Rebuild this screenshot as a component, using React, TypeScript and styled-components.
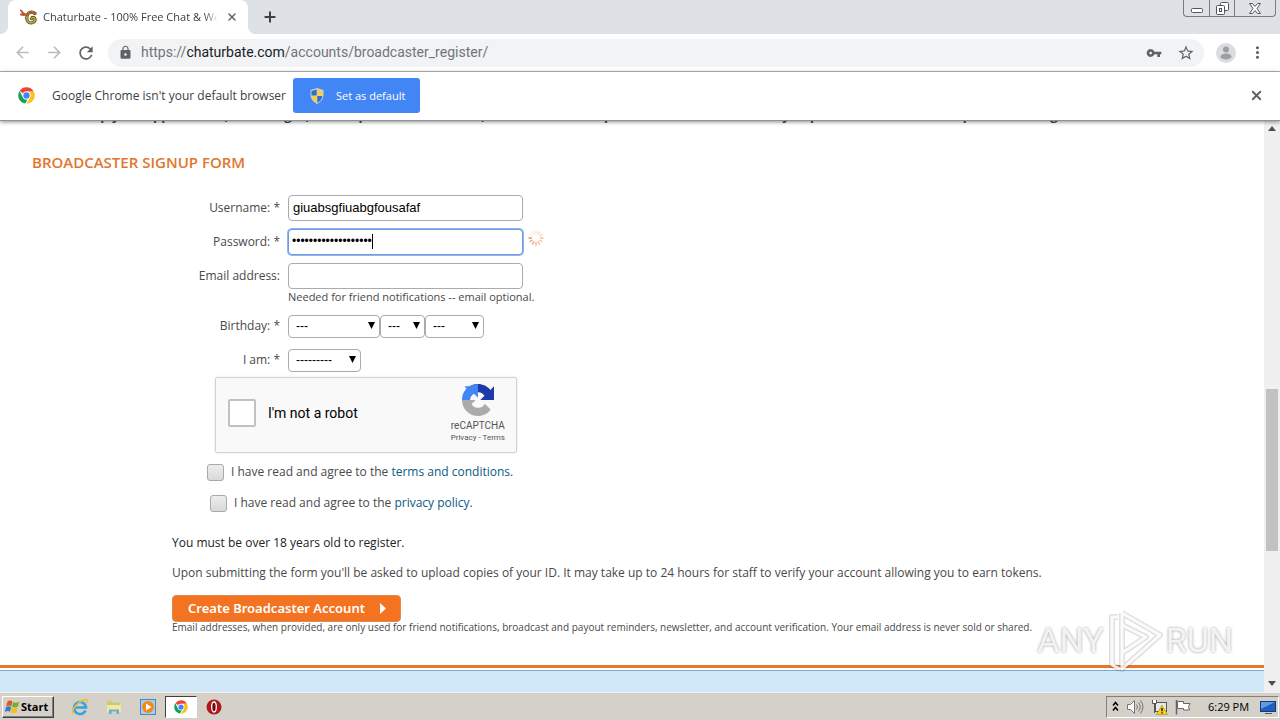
import React from "react";
import styled, { createGlobalStyle, css } from "styled-components";
import { X, Plus } from "lucide-react";
import { MdArrowBack, MdArrowForward, MdRefresh, MdLock, MdVpnKey, MdStarBorder, MdMoreVert } from "react-icons/md";

const ui = `"Open Sans", "Liberation Sans", sans-serif`;
const page = `"Open Sans", "Noto Sans", sans-serif`;

const Global = createGlobalStyle`
  *, *::before, *::after { box-sizing: border-box; }
  body { margin: 0; background: #fff; font-family: ${page}; }
  button, input, select { font: inherit; color: inherit; margin: 0; }
`;

const Screen = styled.div`
  display: flex;
  flex-direction: column;
  height: 100vh;
  overflow: hidden;
`;

/* Browser frame */
const TabStrip = styled.header`
  display: flex;
  align-items: stretch;
  flex: none;
  height: 34px;
  padding: 0 4px 0 8px;
  background: #dee1e6;
  font: 11px/34px ${ui};
`;

const Tab = styled.div`
  position: relative;
  display: flex;
  align-items: center;
  width: 240px;
  padding: 0 10px 0 12px;
  border-radius: 8px 8px 0 0;
  background: #fff;
  color: #3c4043;
  &::before, &::after {
    content: "";
    position: absolute;
    bottom: 0;
    width: 8px;
    height: 8px;
  }
  &::before { right: 100%; background: radial-gradient(circle at 0 0, transparent 8px, #fff 8px); }
  &::after { left: 100%; background: radial-gradient(circle at 100% 0, transparent 8px, #fff 8px); }
`;

const TabTitle = styled.span`
  flex: 1;
  margin: 0 8px 0 6px;
  overflow: hidden;
  white-space: nowrap;
  mask-image: linear-gradient(to right, #000 92%, transparent);
`;

const IconButton = styled.button<{ $w?: number; $tone?: string }>`
  display: flex;
  align-items: center;
  justify-content: center;
  flex: none;
  width: ${(p) => p.$w ?? 32}px;
  padding: 0;
  border: 0;
  background: none;
  color: ${(p) => p.$tone ?? "#5f6368"};
`;

const WindowButtons = styled.div`
  display: flex;
  height: 17px;
  margin-left: auto;
  border: 1px solid #777c86;
  border-top: 0;
  border-radius: 0 0 4px 4px;
`;

const WindowButton = styled.button<{ $w: number }>`
  display: flex;
  align-items: center;
  justify-content: center;
  width: ${(p) => p.$w}px;
  padding: 0;
  border: 0;
  background: none;
  & + & { border-left: 1px solid #777c86; }
`;

const Toolbar = styled.nav`
  display: flex;
  align-items: center;
  flex: none;
  height: 38px;
  padding: 0 6px;
  border-bottom: 1px solid #b4b6b8;
  background: #fff;
`;

const AddressBar = styled.div`
  display: flex;
  align-items: center;
  flex: 1;
  height: 28px;
  margin: 0 8px 0 6px;
  padding: 0 2px 0 10px;
  border-radius: 14px;
  background: #f1f3f4;
  font: 14px/26px Roboto, sans-serif;
  color: #70757a;
`;

const Url = styled.a`
  flex: 1;
  margin-left: 8px;
  padding-bottom: 2px;
  color: inherit;
  text-decoration: none;
  b { font-weight: 400; color: #202124; }
`;

const InfoBar = styled.aside`
  position: relative;
  display: flex;
  align-items: center;
  flex: none;
  height: 49px;
  padding: 0 8px 1px 18px;
  border-bottom: 1px solid #8f9294;
  background: #fff;
  box-shadow: 0 1px 4px rgba(0, 0, 0, 0.45);
  font: 12px/16px ${ui};
  color: #3c4043;
  z-index: 1;
`;

const InfoText = styled.span`
  margin: 0 7px 0 17px;
  white-space: nowrap;
`;

const DefaultButton = styled.button`
  display: flex;
  align-items: center;
  gap: 12px;
  width: 127px;
  height: 35px;
  margin-right: auto;
  padding: 0 0 0 17px;
  border: 0;
  border-radius: 3px;
  background: #4285f4;
  color: #fff;
  font-size: 11px;
`;

/* Web page */
const Viewport = styled.div`
  display: flex;
  flex: 1;
  min-height: 0;
`;

const Page = styled.main`
  display: flex;
  flex-direction: column;
  flex: 1;
  min-width: 0;
  overflow: hidden;
  font-size: 12px;
  line-height: 20px;
  color: #494949;
`;

const Intro = styled.p`
  display: flex;
  align-items: flex-end;
  flex: none;
  height: 5px;
  margin: 0 32px;
  overflow: hidden;
  font-weight: 700;
  white-space: nowrap;
  line-height: 22px;
  font-size: 13px;
`;

const Title = styled.h1`
  margin: 26px 32px 19px;
  font: 600 15px/20px ${page};
  color: #e2752b;
`;

const Form = styled.form`
  display: flex;
  flex-direction: column;
  align-items: flex-start;
`;

const Row = styled.div`
  display: flex;
  align-items: center;
  height: 34px;
`;

const Label = styled.label`
  width: 280px;
  margin-right: 8px;
  text-align: right;
`;

const InputWrap = styled.span`
  position: relative;
  display: flex;
  margin-right: 5px;
`;

const control = css`
  border: 1px solid #ababab;
  border-radius: 4px;
  background: #fff;
  font-family: "Liberation Sans", Arial, sans-serif;
  color: #000;
  outline: 0;
`;

const Input = styled.input<{ $active?: boolean }>`
  ${control}
  width: 235px;
  height: 26px;
  padding: 0 4px 2px;
  font-size: 13px;
  ${(p) => p.$active && css`
    padding: 0 3px 2px;
    border-color: #6d9be6;
    box-shadow: 0 0 0 1px #8fb4ee;
    font-size: 12px;
  `}
`;

const Caret = styled.i`
  position: absolute;
  left: 84px;
  top: 5px;
  width: 1px;
  height: 15px;
  background: #000;
`;

const Help = styled.small`
  height: 18px;
  margin: -2px 0 0 288px;
  font-size: 11px;
  line-height: 11px;
`;

const SelectWrap = styled.span<{ $w: number }>`
  position: relative;
  display: flex;
  width: ${(p) => p.$w}px;
  svg {
    position: absolute;
    right: 5px;
    top: 7px;
    pointer-events: none;
  }
`;

const SelectBox = styled.select`
  ${control}
  appearance: none;
  width: 100%;
  height: 23px;
  padding: 0 7px;
  font-size: 12px;
`;

const Captcha = styled.div`
  display: flex;
  align-items: center;
  width: 302px;
  height: 76px;
  margin: 0 0 3px 215px;
  padding: 0 11px 4px 12px;
  border: 1px solid #d3d3d3;
  border-radius: 2px;
  background: #f9f9f9;
  box-shadow: 0 0 3px rgba(0, 0, 0, 0.1);
  font: 14px/18px Roboto, sans-serif;
  color: #000;
`;

const CaptchaBox = styled.input`
  appearance: none;
  width: 28px;
  height: 28px;
  margin: 0 12px 0 0;
  border: 2px solid #c1c1c1;
  border-radius: 2px;
  background: #fff;
`;

const CaptchaBrand = styled.div`
  display: flex;
  flex-direction: column;
  align-items: center;
  margin: 2px 0 0 auto;
  color: #555;
  font-size: 10px;
  line-height: 13px;
  svg { margin-bottom: 3px; }
  small { font-size: 8px; line-height: 12px; }
  a { color: inherit; text-decoration: none; }
`;

const Agree = styled.label<{ $indent: number }>`
  display: flex;
  align-items: center;
  height: 31px;
  margin-left: ${(p) => p.$indent}px;
  a { color: #0a5a83; text-decoration: none; }
`;

const Tick = styled.input`
  appearance: none;
  width: 17px;
  height: 17px;
  margin: 1px 7px 0 0;
  border: 1px solid #a9a9a9;
  border-radius: 3px;
  background: linear-gradient(#ededed, #d9d9d9);
`;

const Closing = styled.section`
  display: flex;
  flex-direction: column;
  align-items: flex-start;
  margin: 15px 0 0 172px;
`;

const Note = styled.p<{ $bold?: boolean }>`
  margin: 0 0 10px;
  font-weight: ${(p) => (p.$bold ? 500 : 400)};
  color: ${(p) => (p.$bold ? "#222" : "inherit")};
  white-space: nowrap;
`;

const Submit = styled.button`
  display: flex;
  align-items: center;
  justify-content: space-between;
  height: 27px;
  min-width: 229px;
  margin-top: 2px;
  padding: 0 14px 2px 15px;
  border: 1px solid #dd8a55;
  border-radius: 4px;
  background: #f47321;
  color: #fff;
  font: 600 13px/20px "Noto Sans", ${page};
  svg { margin-top: 2px; }
`;

const Fine = styled.small`
  font-size: 10px;
  line-height: 10px;
  white-space: nowrap;
`;

const Footer = styled.footer`
  flex: 1;
  margin-top: 33px;
  padding-top: 2px;
  border-top: 3px solid #e8772e;
  &::before {
    content: "";
    display: block;
    height: 100%;
    border-top: 1px solid #85a9c4;
    background: #d0e8f8;
  }
`;

const Scrollbar = styled.div`
  display: flex;
  flex-direction: column;
  align-items: center;
  width: 16px;
  padding: 5px 0 6px;
  background: #f0f0f0;
`;

const Thumb = styled.div`
  width: 12px;
  flex: 162;
  background: #c1c1c1;
`;

const Track = styled.div<{ $grow: number }>`
  flex: ${(p) => p.$grow};
`;

const Watermark = styled.div`
  position: absolute;
  right: 47px;
  bottom: 47px;
  display: flex;
  align-items: center;
  gap: 2px;
  font: 400 34px/66px Roboto, "Liberation Sans", sans-serif;
  color: rgba(255, 255, 255, 0.85);
  text-shadow: 0 0 3px rgba(0, 0, 0, 0.4);
  z-index: 2;
`;

/* Taskbar */
const Taskbar = styled.footer`
  display: flex;
  align-items: center;
  flex: none;
  height: 28px;
  padding: 0 1px 0 2px;
  border-top: 1px solid #f4f2ee;
  background: #d5d0c8;
  font: 12px/20px "Open Sans", "Liberation Sans", sans-serif;
  color: #000;
`;

const Start = styled.button`
  display: flex;
  align-items: center;
  gap: 1px;
  height: 22px;
  width: 52px;
  margin-right: 9px;
  padding: 0 2px;
  border: 1px solid;
  border-color: #fff #404040 #404040 #fff;
  box-shadow: inset -1px -1px #808080;
  background: #d5d0c8;
  font: 700 11px/16px "Open Sans", sans-serif;
`;

const Task = styled.button<{ $active?: boolean }>`
  display: flex;
  align-items: center;
  justify-content: center;
  width: ${(p) => (p.$active ? 32 : 34)}px;
  height: 22px;
  padding: 0;
  border: 1px solid transparent;
  background: none;
  ${(p) => p.$active && css`
    border-color: #404040 #fff #fff #404040;
    background: #fff;
  `}
`;

const Tray = styled.div`
  display: flex;
  align-items: center;
  gap: 7px;
  height: 22px;
  margin-left: auto;
  padding: 0 2px 0 5px;
  border: 1px solid;
  border-color: #808080 #fff #fff #808080;
`;

const Clock = styled.time`
  width: 42px;
  margin: 0 3px 0 9px;
  font-size: 11px;
  white-space: nowrap;
`;

const ChromeLogo = ({ size = 18 }: { size?: number }) => (
  <svg width={size} height={size} viewBox="0 0 48 48">
    <circle cx="24" cy="24" r="23" fill="#fff" />
    <path d="M24 1a23 23 0 0 1 20 11.5H24A11.5 11.5 0 0 0 14 18L5 10.800A23 23 0 0 1 24 1z" fill="#ea4335" />
    <path d="M44 12.500A23 23 0 0 1 24 47l10-17.300a11.500 11.500 0 0 0 0-11.500L32 12.500z" fill="#fbc116" />
    <path d="M4.500 11.500L14 29.700A11.500 11.500 0 0 0 27 35L20.500 46.800A23 23 0 0 1 4.500 11.500z" fill="#16a05d" />
    <circle cx="24" cy="24" r="11" fill="#fff" />
    <circle cx="24" cy="24" r="9" fill="#4285f4" />
  </svg>
);

const Lizard = () => (
  <svg width="17" height="16" viewBox="0 0 17 16" fill="none" strokeLinecap="round">
    <path d="M15 4.500C12 2 8 3 7 7c-.8 4 1 7 4 7s4.500-2 4-4-3-2-3.500-.3" stroke="#55502a" strokeWidth="3.200" />
    <path d="M15 4.500C12 2 8 3 7 7c-.8 4 1 7 4 7s4.500-2 4-4-3-2-3.500-.3" stroke="#b3ab45" strokeWidth="1.600" />
    <path d="M7.500 6c1-2.500 3.500-3.500 6-2.500" stroke="#b5692c" strokeWidth="2" />
    <path d="M1 1.500l2 2.500L6.500 6M1 5.500l3 .5M10 3.500l5 1" stroke="#b5592c" strokeWidth="2" />
  </svg>
);

const Shield = () => (
  <svg width="14" height="16" viewBox="0 0 14 16">
    <path d="M7 0l6.500 2v5c0 4-3 7-6.500 9C3.500 14 .5 11 .5 7V2z" fill="#c9ced6" />
    <path d="M6.700 1.500v6H1.500V3z" fill="#2f6fc4" />
    <path d="M7.300 1.500v6h5.200V3z" fill="#f5d13a" />
    <path d="M6.700 8H1.600c.3 3 2.400 5.200 5.100 6.700z" fill="#f5d13a" />
    <path d="M7.300 8h5.100c-.3 3-2.400 5.200-5.100 6.700z" fill="#2f6fc4" />
  </svg>
);

const SpinnerBox = styled.span`
  display: flex;
  align-self: flex-start;
  padding-top: 5px;
`;

const Spinner = () => (
  <SpinnerBox>
    <svg width="16" height="16" viewBox="-8 -8 16 16" stroke="#f0905a" strokeWidth="1.300" strokeLinecap="round">
      {Array.from({ length: 12 }, (_, i) => (
        <line key={i} x1="0" y1="-4.500" x2="0" y2="-7" transform={`rotate(${270 - i * 30})`} opacity={1 - i * 0.075} />
      ))}
    </svg>
  </SpinnerBox>
);

const CaptchaLogo = () => (
  <svg width="32" height="32" viewBox="0 0 64 64">
    <path d="M64 31.950c0-.46-.01-.92-.03-1.370V4.600l-7.180 7.180C50.900 4.600 41.980 0 31.980 0 21.580 0 12.340 4.960 6.500 12.640l11.770 11.900a15.600 15.600 0 0 1 4.770-5.350c2.060-1.600 4.970-2.920 8.980-2.920.48 0 .86.060 1.140.17 4.970.39 9.270 3.130 11.810 7.100l-8.330 8.330c10.550-.04 22.470-.07 27.360.08z" fill="#1c3aa9" />
    <path d="M31.860 0C26 0 20 1.500 15 4.600H5l4 5A31 31 0 0 0 0 32.020l16.270-.06c0-.48.060-.86.170-1.140.39-4.970 3.130-9.270 7.100-11.810l8.330 8.330c-.04-10.550-.07-22.470-.01-27.340z" fill="#4285f4" />
    <path d="M0 32.020C0 50 14 63.980 32.020 63.980c10.400 0 19.640-4.960 25.480-12.640L45.730 39.440a15.600 15.600 0 0 1-4.770 5.350c-2.060 1.600-4.970 2.920-8.980 2.920-.48 0-.86-.06-1.140-.17-4.970-.39-9.270-3.130-11.810-7.100l8.330-8.330C16.810 32.150 4.890 32.180 0 32.020z" fill="#ababab" />
  </svg>
);

const WindowsLogo = () => (
  <svg width="15" height="16" viewBox="0 0 15 16">
    <path d="M2.500 2.500C4.500 1 6 1.500 7.500 2.500L6.300 7.300C4.800 6.300 3.300 6 1.200 7.200z" fill="#e8501e" />
    <path d="M8.200 3c1.800 1 3.800 1 6-.5l-1.300 5C11 8.800 9 8.800 7 7.700z" fill="#6bb52c" />
    <path d="M1 8c2-1.200 3.700-1 5.200 0L5 12.700C3.500 11.800 1.800 11.800-.2 13z" fill="#2f7fd0" />
    <path d="M6.900 8.500c1.800 1 3.800 1 5.900-.2l-1.300 4.900c-2 1.300-4 1.200-5.900.1z" fill="#f6bd1c" />
  </svg>
);

const Drop = ({ label, width, text, id }: { label?: string; width: number; text: string; id?: string }) => (
  <SelectWrap $w={width}>
    <SelectBox id={id} aria-label={label}>
      <option>{text}</option>
    </SelectBox>
    <svg width="7" height="7" viewBox="0 0 7 7"><path d="M0 0h7L3.500 7z" fill="#000" /></svg>
  </SelectWrap>
);

export default function App() {
  return (
    <Screen>
      <Global />
      <TabStrip>
        <Tab>
          <Lizard />
          <TabTitle>Chaturbate - 100% Free Chat &amp; Webcams</TabTitle>
          <IconButton $w={12} aria-label="Close tab"><X size={12} strokeWidth={3} /></IconButton>
        </Tab>
        <IconButton $w={44} $tone="#3c4043" aria-label="New tab"><Plus size={16} strokeWidth={3} /></IconButton>
        <WindowButtons>
          <WindowButton $w={25} aria-label="Minimize">
            <svg width="12" height="12"><rect x=".5" y="6.500" width="11" height="4" rx="1" fill="#fff" stroke="#50545c" /></svg>
          </WindowButton>
          <WindowButton $w={25} aria-label="Restore">
            <svg width="13" height="13" fill="#fff" stroke="#50545c">
              <rect x="4.500" y=".5" width="8" height="8" rx="1" />
              <rect x=".5" y="3.500" width="8" height="9" rx="1" />
              <rect x="3.500" y="6.500" width="2" height="3" />
            </svg>
          </WindowButton>
          <WindowButton $w={41} aria-label="Close">
            <svg width="12" height="11" viewBox="0 0 12 11" fill="#fff" stroke="#50545c">
              <path d="M.5.5h3L6 3.500 8.500.5h3L8 5.500l3.500 5h-3L6 7.500l-2.500 3h-3L4 5.500z" />
            </svg>
          </WindowButton>
        </WindowButtons>
      </TabStrip>

      <Toolbar>
        <IconButton $tone="#b9bbbe" aria-label="Back"><MdArrowBack size={19} /></IconButton>
        <IconButton $tone="#b9bbbe" aria-label="Forward"><MdArrowForward size={19} /></IconButton>
        <IconButton aria-label="Reload"><MdRefresh size={20} /></IconButton>
        <AddressBar>
          <MdLock size={15} color="#5f6368" />
          <Url href="#">https://<b>chaturbate.com</b>/accounts/broadcaster_register/</Url>
          <IconButton aria-label="Saved passwords"><MdVpnKey size={16} /></IconButton>
          <IconButton aria-label="Bookmark"><MdStarBorder size={18} /></IconButton>
        </AddressBar>
        <IconButton $w={28} aria-label="Profile">
          <svg width="20" height="20">
            <circle cx="10" cy="10" r="10" fill="#dadcdf" />
            <circle cx="10" cy="6.500" r="3" fill="#9b9ea2" />
            <ellipse cx="10" cy="13.500" rx="5.500" ry="3" fill="#9b9ea2" />
          </svg>
        </IconButton>
        <IconButton $w={34} aria-label="Menu"><MdMoreVert size={19} /></IconButton>
      </Toolbar>

      <InfoBar>
        <ChromeLogo size={17} />
        <InfoText>Google Chrome isn't your default browser</InfoText>
        <DefaultButton><Shield />Set as default</DefaultButton>
        <IconButton aria-label="Dismiss"><X size={15} strokeWidth={3} /></IconButton>
      </InfoBar>

      <Viewport>
        <Page>
          <Intro>Once set up your applications, and images, will be posted there alone, and shown in our products and otherwise only to particular viewers who prefer dancing.</Intro>
          <Title>BROADCASTER SIGNUP FORM</Title>
          <Form onSubmit={(e) => e.preventDefault()}>
            <Row>
              <Label htmlFor="username">Username: *</Label>
              <InputWrap><Input id="username" defaultValue="giuabsgfiuabgfousafaf" /></InputWrap>
            </Row>
            <Row>
              <Label htmlFor="password">Password: *</Label>
              <InputWrap>
                <Input id="password" type="password" $active defaultValue="giuabsgfiuabgfousaf" />
                <Caret />
              </InputWrap>
              <Spinner />
            </Row>
            <Row>
              <Label htmlFor="email">Email address:</Label>
              <InputWrap><Input id="email" /></InputWrap>
            </Row>
            <Help>Needed for friend notifications -- email optional.</Help>
            <Row>
              <Label htmlFor="month">Birthday: *</Label>
              <Drop id="month" width={92} text="---" />
              <Drop label="Day" width={45} text="---" />
              <Drop label="Year" width={59} text="---" />
            </Row>
            <Row>
              <Label htmlFor="gender">I am: *</Label>
              <Drop id="gender" width={73} text="---------" />
            </Row>
            <Captcha>
              <CaptchaBox type="checkbox" id="robot" />
              <label htmlFor="robot">I'm not a robot</label>
              <CaptchaBrand>
                <CaptchaLogo />
                reCAPTCHA
                <small><a href="#">Privacy</a> - <a href="#">Terms</a></small>
              </CaptchaBrand>
            </Captcha>
            <Agree $indent={207}>
              <Tick type="checkbox" />
              <span>I have read and agree to the <a href="#">terms and conditions</a>.</span>
            </Agree>
            <Agree $indent={210}>
              <Tick type="checkbox" />
              <span>I have read and agree to the <a href="#">privacy policy</a>.</span>
            </Agree>
            <Closing>
              <Note $bold>You must be over 18 years old to register.</Note>
              <Note>Upon submitting the form you'll be asked to upload copies of your ID. It may take up to 24 hours for staff to verify your account allowing you to earn tokens.</Note>
              <Submit type="submit">
                Create Broadcaster Account
                <svg width="6" height="11" viewBox="0 0 6 11"><path d="M0 0l6 5.500L0 11z" fill="#fff" /></svg>
              </Submit>
              <Fine>Email addresses, when provided, are only used for friend notifications, broadcast and payout reminders, newsletter, and account verification. Your email address is never sold or shared.</Fine>
            </Closing>
          </Form>
          <Footer />
        </Page>
        <Scrollbar>
          <svg width="8" height="5"><path d="M0 5l4-5 4 5z" fill="#505050" /></svg>
          <Track $grow={258} />
          <Thumb />
          <Track $grow={130} />
          <svg width="8" height="5"><path d="M0 0l4 5 4-5z" fill="#505050" /></svg>
        </Scrollbar>
      </Viewport>

      <Taskbar>
        <Start><WindowsLogo />Start</Start>
        <Task aria-label="Internet Explorer">
          <svg width="18" height="18" viewBox="0 0 18 18" fill="none">
            <path d="M14.500 12.500A6 6 0 1 1 15 9.500H4" stroke="#38a3e0" strokeWidth="2.600" />
            <path d="M2 16C-1 13 8 2 15 1.500c2 0 2 2 1 3.500" stroke="#f0bd2e" strokeWidth="1.500" />
          </svg>
        </Task>
        <Task aria-label="File Explorer">
          <svg width="16" height="16" viewBox="0 0 16 16">
            <path d="M1 2h5l1 1.500h7V13H1z" fill="#e8c75a" />
            <path d="M2 4h11v4H2z" fill="#a9d48a" />
            <path d="M1 6h14v7H1z" fill="#f8e69a" />
            <path d="M3 15v-4.500h10V15h-2.500v-2.500h-5V15z" fill="#5fb0e2" />
          </svg>
        </Task>
        <Task aria-label="Media Player">
          <svg width="16" height="16" viewBox="0 0 16 16">
            <rect x=".5" y=".5" width="15" height="15" fill="#a9cdeb" stroke="#4d87bd" />
            <circle cx="8" cy="8" r="6" fill="#f28a1c" />
            <path d="M6 4.500l5.500 3.500L6 11.500z" fill="#fff" />
          </svg>
        </Task>
        <Task $active aria-label="Chrome"><ChromeLogo size={14} /></Task>
        <Task aria-label="Opera">
          <svg width="16" height="16" viewBox="0 0 16 16">
            <circle cx="8" cy="8" r="7.500" fill="#b0181c" />
            <ellipse cx="8" cy="8" rx="2.300" ry="5" fill="#6d0a0d" stroke="#fff" strokeWidth="1.300" />
          </svg>
        </Task>
        <Tray>
          <svg width="7" height="11" fill="none" stroke="#000" strokeWidth="1.500"><path d="M1 4.500l2.500-3L6 4.500M1 9.500l2.500-3L6 9.500" /></svg>
          <svg width="18" height="16" viewBox="0 0 18 16" fill="none" stroke="#777">
            <path d="M1.500 5.500h3l4-4v13l-4-4h-3z" fill="#fff" />
            <path d="M10.500 5.500q2 2.500 0 5M12.500 3.500q3.500 4.500 0 9M14.500 1.500q5 6.500 0 13" />
          </svg>
          <svg width="17" height="16" viewBox="0 0 17 16">
            <rect x="4.500" y="3.500" width="11" height="9" fill="#e8e8e8" stroke="#555" />
            <path d="M1.500 1v3.500h4V1M3.500 4.500V14" stroke="#555" fill="#fff" />
            <path d="M11 6l5.500 9.500h-11z" fill="#f7d31e" stroke="#a88a00" strokeWidth=".6" />
            <path d="M11 9v3.200M11 13.300v1.200" stroke="#000" strokeWidth="1.300" />
          </svg>
          <svg width="17" height="16" viewBox="0 0 17 16" fill="#fff" stroke="#666">
            <path d="M1.500 1v14.500" strokeWidth="1.500" />
            <path d="M2.500 2.500h6v2h6.500L13.500 7.500l1 3.500H8.500V9.500h-6z" />
          </svg>
          <Clock>6:29 PM</Clock>
          <svg width="16" height="14" viewBox="0 0 16 14">
            <rect x=".5" y="1.500" width="15" height="10" fill="#1f5fc0" stroke="#173a72" />
            <path d="M1 2h14L1 9z" fill="#5d9be8" />
            <path d="M5 13.500h7" stroke="#555" />
          </svg>
        </Tray>
      </Taskbar>

      <Watermark>
        ANY
        <svg width="58" height="66" viewBox="0 0 58 66" fill="none" strokeLinejoin="round">
          <path d="M12 10H6v48l8 4M16 6l38 22-38 34V46M16 6v40l24-16-24-12" stroke="rgba(0,0,0,.12)" strokeWidth="6" />
          <path d="M12 10H6v48l8 4M16 6l38 22-38 34V46M16 6v40l24-16-24-12" stroke="rgba(255,255,255,.85)" strokeWidth="3" />
        </svg>
        RUN
      </Watermark>
    </Screen>
  );
}
